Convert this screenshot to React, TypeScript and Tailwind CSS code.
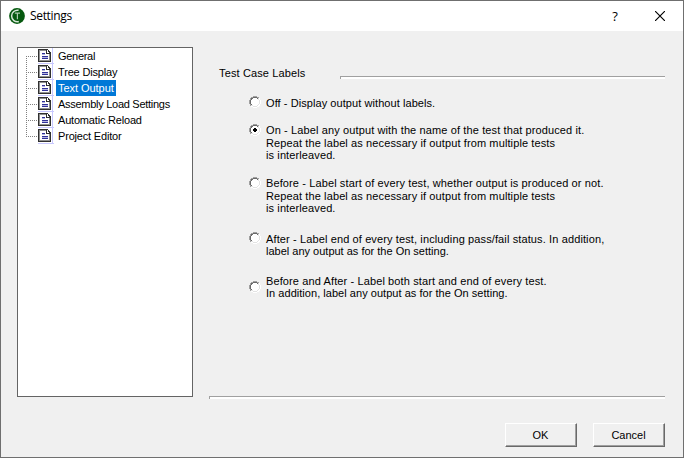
import React from "react";

type Line = { text: string; cls: string };
type Option = { gap: string; radio: string; checked?: boolean; lines: Line[] };

const pages = [
  { label: "General", cls: "tracking-[-0.3px]" },
  { label: "Tree Display", cls: "tracking-[-0.16px]" },
  { label: "Text Output", cls: "tracking-[-0.05px]" },
  { label: "Assembly Load Settings", cls: "tracking-[-0.28px]" },
  { label: "Automatic Reload", cls: "tracking-[-0.19px]" },
  { label: "Project Editor", cls: "tracking-[-0.18px]" },
];

const options: Option[] = [
  {
    gap: "pt-[17px]",
    radio: "mt-0",
    lines: [{ text: "Off - Display output without labels.", cls: "h-[13px] tracking-[0.07px]" }],
  },
  {
    gap: "pt-[14px]",
    radio: "mt-px",
    checked: true,
    lines: [
      { text: "On - Label any output with the name of the test that produced it.", cls: "h-[13px] tracking-[0.12px]" },
      { text: "Repeat the label as necessary if output from multiple tests", cls: "h-[12px] tracking-[0.113px]" },
      { text: "is interleaved.", cls: "h-[13px] tracking-[0.11px]" },
    ],
  },
  {
    gap: "pt-[15px]",
    radio: "mt-px",
    lines: [
      { text: "Before - Label start of every test, whether output is produced or not.", cls: "h-[13px] tracking-[0.114px]" },
      { text: "Repeat the label as necessary if output from multiple tests", cls: "h-[12px] tracking-[0.113px]" },
      { text: "is interleaved.", cls: "h-[13px] tracking-[0.11px]" },
    ],
  },
  {
    gap: "pt-[18px]",
    radio: "mt-0",
    lines: [
      { text: "After - Label end of every test, including pass/fail status. In addition,", cls: "h-[12px] tracking-[0.12px]" },
      { text: "label any output as for the On setting.", cls: "h-[13px] tracking-[0px]" },
    ],
  },
  {
    gap: "pt-[17px]",
    radio: "mt-[7px]",
    lines: [
      { text: "Before and After - Label both start and end of every test.", cls: "h-[12px] tracking-[0.115px]" },
      { text: "In addition, label any output as for the On setting.", cls: "h-[13px] tracking-[0.035px]" },
    ],
  },
];

function AppIcon() {
  return (
    <svg width="16" height="16" viewBox="0 0 16 16" className="block">
      <circle cx="8" cy="8" r="7.9" fill="#06590f" />
      <path d="M9.6 2.3A5.8 5.8 0 1 0 9.8 13.6" fill="none" stroke="#d5e6d6" strokeWidth="1.5" />
      <path d="M5.8 5.1h5.2M8.4 5v6.3" fill="none" stroke="#a9c9ab" strokeWidth="1.2" />
    </svg>
  );
}

function PageIcon() {
  return (
    <svg width="16" height="16" viewBox="0 0 16 16" shapeRendering="crispEdges" className="block shrink-0">
      <path d="M14 0h1v15h1v1H0v-1h14z" fill="#c8c8ff" />
      <path d="M1 2h8v3h3v8H1z" fill="#fff" />
      <path d="M1 2h8v1H2v9h9V6h1v7H1z" fill="#909090" />
      <path d="M0 1h10v1H1v12h11V5h1v9H0zM0 13h13v1H0zM8 2h1v3h3v1H8zM10 2h1v1h1v1h1v2h-2V4h-1z" fill="#303030" />
      <path d="M4 5h3v1H4zM4 8h6v1H4zM4 10h6v1H4z" fill="#30309a" />
      <path d="M4 6h3v1H4zM4 9h6v1H4z" fill="#b4b4dc" />
    </svg>
  );
}

function Radio({ checked }: { checked?: boolean }) {
  return (
    <svg width="12" height="12" viewBox="0 0 12 12" shapeRendering="crispEdges" className="block">
      <path d="M4 1h4v1h2v2h1v4h-1v2H8v1H4v-1H2V8H1V4h1V2h2z" fill="#fff" />
      <path d="M4 0h4v1H4zM2 1h2v1H2zM8 1h2v1H8zM1 2h1v2H1zM0 4h1v4H0zM1 8h1v2H1z" fill="#a0a0a0" />
      <path d="M4 1h4v1H4zM2 2h2v1H2zM8 2h1v1H8zM2 3h1v1H2zM1 4h1v4H1zM2 8h1v1H2z" fill="#696969" />
      <path d="M10 2h1v2h-1zM11 4h1v4h-1zM10 8h1v2h-1zM8 10h2v1H8zM4 11h4v1H4zM2 10h2v1H2z" fill="#fff" />
      <path d="M9 2h1v2H9zM10 4h1v4h-1zM9 8h1v1H9zM8 9h1v1H8zM4 10h4v1H4zM2 9h2v1H2z" fill="#e3e3e3" />
      {checked && <path d="M5 4h2v1h1v2H7v1H5V7H4V5h1z" fill="#000" />}
    </svg>
  );
}

function Groove({ className }: { className: string }) {
  return <div className={`h-[3px] shrink-0 border-t border-l border-[#a0a0a0] bg-white ${className}`} />;
}

function PushButton({ children }: { children: React.ReactNode }) {
  return (
    <button className="h-6 w-[72px] border border-t-white border-l-white border-r-[#696969] border-b-[#696969] bg-[#f0f0f0]">
      <span className="flex h-full w-full items-center justify-center border-r border-b border-[#a0a0a0] text-[11px] leading-3">
        {children}
      </span>
    </button>
  );
}

export default function App() {
  return (
    <div className="flex h-[458px] w-[684px] flex-col overflow-hidden border border-[#6f6f6f] bg-[#f0f0f0] font-['Liberation_Sans',Arial,sans-serif] text-[11px] text-black">
      <header className="flex h-[30px] shrink-0 items-center bg-white pl-2">
        <AppIcon />
        <h1 className="ml-[5px] flex-1 font-['Open_Sans',sans-serif] text-[12px] leading-4 tracking-[-0.33px]">
          Settings
        </h1>
        <span className="w-[45px] pl-px text-center font-['Open_Sans',sans-serif] text-[13px] leading-4 font-medium">?</span>
        <span className="flex w-[46px] justify-center">
          <svg width="10" height="10" viewBox="0 0 10 10" className="mr-px -mt-px">
            <path d="M0 0L10 10M10 0L0 10" stroke="#000" strokeWidth="1.15" />
          </svg>
        </span>
      </header>
      <div className="flex h-[368px] shrink-0">
        <nav className="mt-4 ml-4 h-[350px] w-[176px] border border-[#646464] bg-white">
          {pages.map((p, i) => (
            <div key={p.label} className="flex h-4 items-center">
              <svg width="12" height="16" viewBox="0 0 12 16" shapeRendering="crispEdges" className="ml-2 block shrink-0">
                <path
                  d={i === 0 ? "M.5 8V16" : i === pages.length - 1 ? "M.5 0V9" : "M.5 0V16"}
                  stroke="#808080"
                  strokeDasharray="1 1"
                />
                <path d="M0 8.5H12" stroke="#808080" strokeDasharray="1 1" />
              </svg>
              <PageIcon />
              <span
                className={`ml-[2px] h-4 pr-[2px] pl-[2px] text-[11px] leading-[17px] whitespace-nowrap ${
                  i === 2 ? "bg-[#0078d7] text-white" : ""
                }`}
              >
                <span className={p.cls}>{p.label}</span>
              </span>
            </div>
          ))}
        </nav>
        <main className="ml-4 flex w-[456px] flex-col">
          <div className="flex h-12 shrink-0 items-end pl-[10px]">
            <h2 className="w-[121px] text-[11px] leading-[12px] tracking-[0.13px] whitespace-nowrap">
              Test Case Labels
            </h2>
            <Groove className="w-[325px]" />
          </div>
          <div className="flex-1 pl-10">
            {options.map((o, i) => (
              <div key={i} className={`flex items-start ${o.gap}`}>
                <div className={`w-[17px] ${o.radio}`}>
                  <Radio checked={o.checked} />
                </div>
                <div className="pt-px -mb-px">
                  {o.lines.map((l) => (
                    <div key={l.text} className={`text-[11px] leading-[12px] whitespace-nowrap ${l.cls}`}>
                      {l.text}
                    </div>
                  ))}
                </div>
              </div>
            ))}
          </div>
          <Groove className="w-full" />
        </main>
      </div>
      <footer className="flex justify-end gap-4 pt-[24px] pr-[18px]">
        <PushButton>OK</PushButton>
        <PushButton>Cancel</PushButton>
      </footer>
    </div>
  );
}
